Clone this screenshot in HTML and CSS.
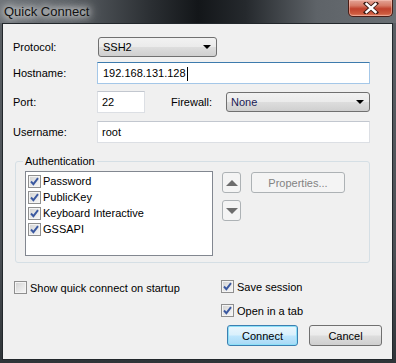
FILE: index.html
```html
<!DOCTYPE html>
<html lang="en">
<head>
  <meta charset="UTF-8">
  <meta name="viewport" content="width=device-width, initial-scale=1.0">
  <title>Quick Connect</title>
  <link rel="stylesheet" href="styles.css">
</head>
<body>
  <div class="window">
    <div class="titlebar">
      <span class="title">Quick Connect</span>
      <span class="close">
        <svg width="16" height="12" viewBox="0 0 16 12">
          <path d="M3 1.5 L13 10.5 M13 1.5 L3 10.5" stroke="#3a1a14" stroke-width="4.2" stroke-linecap="square"/>
          <path d="M3.5 2 L12.5 10 M12.5 2 L3.5 10" stroke="#ffffff" stroke-width="2.4" stroke-linecap="square"/>
        </svg>
      </span>
    </div>

    <div class="panel">
      <div class="row row-first">
        <label class="field-label">Protocol:</label>
        <div class="combo combo-protocol">SSH2<span class="arrow"></span></div>
      </div>

      <div class="row">
        <label class="field-label">Hostname:</label>
        <div class="textbox textbox-wide focused">192.168.131.128<span class="caret"></span></div>
      </div>

      <div class="row row-port">
        <label class="field-label">Port:</label>
        <div class="textbox textbox-port">22</div>
        <label class="firewall-label">Firewall:</label>
        <div class="combo combo-firewall">None<span class="arrow"></span></div>
      </div>

      <div class="row row-user">
        <label class="field-label">Username:</label>
        <div class="textbox textbox-wide">root</div>
      </div>

      <fieldset class="auth-group">
        <legend>Authentication</legend>
        <div class="auth-body">
          <div class="listbox">
            <div class="list-item"><span class="check checked"><svg width="9" height="9" viewBox="0 0 9 9"><path d="M1 4.5 L3.4 7.2 L8 1.2" stroke="#3a58a0" stroke-width="1.9" fill="none"/></svg></span>Password</div>
            <div class="list-item"><span class="check checked"><svg width="9" height="9" viewBox="0 0 9 9"><path d="M1 4.5 L3.4 7.2 L8 1.2" stroke="#3a58a0" stroke-width="1.9" fill="none"/></svg></span>PublicKey</div>
            <div class="list-item"><span class="check checked"><svg width="9" height="9" viewBox="0 0 9 9"><path d="M1 4.5 L3.4 7.2 L8 1.2" stroke="#3a58a0" stroke-width="1.9" fill="none"/></svg></span>Keyboard Interactive</div>
            <div class="list-item"><span class="check checked"><svg width="9" height="9" viewBox="0 0 9 9"><path d="M1 4.5 L3.4 7.2 L8 1.2" stroke="#3a58a0" stroke-width="1.9" fill="none"/></svg></span>GSSAPI</div>
          </div>
          <div class="order-buttons">
            <span class="small-btn"><span class="tri-up"></span></span>
            <span class="small-btn"><span class="tri-down"></span></span>
          </div>
          <span class="btn btn-disabled btn-properties">Properties...</span>
        </div>
      </fieldset>

      <div class="bottom">
        <div class="bottom-left">
          <div class="option"><span class="check"></span>Show quick connect on startup</div>
        </div>
        <div class="bottom-right">
          <div class="option"><span class="check checked"><svg width="9" height="9" viewBox="0 0 9 9"><path d="M1 4.5 L3.4 7.2 L8 1.2" stroke="#3a58a0" stroke-width="1.9" fill="none"/></svg></span>Save session</div>
          <div class="option option-tab"><span class="check checked"><svg width="9" height="9" viewBox="0 0 9 9"><path d="M1 4.5 L3.4 7.2 L8 1.2" stroke="#3a58a0" stroke-width="1.9" fill="none"/></svg></span>Open in a tab</div>
          <div class="actions">
            <span class="btn btn-default">Connect</span>
            <span class="btn btn-cancel">Cancel</span>
          </div>
        </div>
      </div>
    </div>
  </div>
</body>
</html>
```

FILE: styles.css
```css
/* Base styles */
html, body {
  margin: 0;
  padding: 0;
}

body {
  width: 396px;
  height: 363px;
  overflow: hidden;
  background: linear-gradient(to bottom, #5c6166 0%, #4a4f54 70%, #2f3438 100%);
  font-family: "Liberation Sans", Arial, sans-serif;
  font-size: 11px;
  color: #000;
}

.window {
  display: flex;
  flex-direction: column;
  height: 363px;
}

/* Title bar */
.titlebar {
  height: 23px;
  display: flex;
  align-items: flex-start;
  justify-content: space-between;
  background: linear-gradient(to right, #6e7378 0%, #5a5f64 18%, #2b2f33 38%, #131619 50%, #25292d 62%, #5e6368 80%, #6a6f74 100%);
}

.title {
  margin: 4px 0 0 4px;
  font-size: 13px;
  color: #111;
  text-shadow: 0 0 6px #fff, 0 0 10px #e6e6e6, 0 0 14px #d8d8d8;
}

.close {
  width: 45px;
  height: 17px;
  margin-right: 3px;
  box-sizing: border-box;
  border: 1px solid #4a1d16;
  border-top: none;
  border-radius: 0 0 5px 5px;
  background: linear-gradient(to bottom, #e4a597 0%, #d67a66 35%, #c0412c 55%, #cd5a3e 85%, #e2866a 100%);
  box-shadow: inset 0 0 0 1px rgba(255, 210, 200, 0.45);
  display: flex;
  align-items: center;
  justify-content: center;
}

/* Dialog panel */
.panel {
  margin-left: 2px;
  width: 391px;
  height: 337px;
  box-sizing: border-box;
  border: 1px solid #22272b;
  background: #f0f0f0;
  padding: 13px 0 0 10px;
}

.row {
  display: flex;
  align-items: center;
  height: 22px;
  margin-top: 5px;
}

.row-first {
  height: 20px;
  margin-top: 0;
}

.row-port {
  margin-top: 7px;
}

.row-user {
  margin-top: 8px;
}

.field-label {
  width: 84px;
  flex-shrink: 0;
}

/* Combo boxes */
.combo {
  position: relative;
  height: 20px;
  box-sizing: border-box;
  border: 1px solid #707070;
  border-radius: 3px;
  background: linear-gradient(to bottom, #f2f2f2 0%, #ebebeb 48%, #dddddd 52%, #cfcfcf 100%);
  padding: 3px 0 0 4px;
  line-height: 13px;
}

.combo-protocol {
  width: 119px;
  margin-left: 1px;
}

.combo-firewall {
  width: 144px;
  color: #1a1a55;
}

.arrow {
  position: absolute;
  right: 5px;
  top: 7px;
  width: 0;
  height: 0;
  border-left: 4px solid transparent;
  border-right: 4px solid transparent;
  border-top: 4px solid #000;
}

/* Text boxes */
.textbox {
  height: 22px;
  box-sizing: border-box;
  border: 1px solid #dcdfe4;
  border-top-color: #c2c7cf;
  background: #fff;
  padding: 4px 0 0 4px;
  line-height: 13px;
  display: flex;
}

.textbox-wide {
  width: 273px;
}

.textbox.focused {
  border-color: #a4c7e8;
  border-top-color: #3d7bad;
  padding-left: 5px;
}

.textbox-port {
  width: 48px;
}

.caret {
  width: 1px;
  height: 14px;
  background: #000;
  margin-left: 1px;
}

.firewall-label {
  margin-left: 26px;
  width: 55px;
}

/* Authentication group */
.auth-group {
  margin: 12px 0 0 2px;
  padding: 0 0 6px 9px;
  width: 355px;
  box-sizing: border-box;
  border: 1px solid #d5dfe5;
  border-radius: 3px;
}

.auth-group legend {
  margin-left: -2px;
  padding: 0 2px;
  line-height: 13px;
}

.auth-body {
  display: flex;
  align-items: flex-start;
  margin-top: 3px;
}

.listbox {
  width: 188px;
  height: 85px;
  box-sizing: border-box;
  border: 1px solid #828790;
  background: #fff;
  padding: 1px 0 0 2px;
}

.list-item {
  height: 16px;
  display: flex;
  align-items: center;
}

.check {
  width: 13px;
  height: 13px;
  box-sizing: border-box;
  border: 1px solid #8f8f8f;
  background: linear-gradient(135deg, #d0d0d0 0%, #e6e6e6 50%, #f7f7f7 100%);
  box-shadow: inset 0 0 0 1px #f4f4f4;
  display: flex;
  align-items: center;
  justify-content: center;
  margin-right: 2px;
  flex-shrink: 0;
}

.order-buttons {
  display: flex;
  flex-direction: column;
  gap: 7px;
  margin-left: 9px;
  margin-top: 1px;
}

.small-btn {
  width: 19px;
  height: 21px;
  box-sizing: border-box;
  border: 1px solid #adb2b5;
  border-radius: 3px;
  background: #f4f4f4;
  display: flex;
  align-items: center;
  justify-content: center;
}

.tri-up {
  border-left: 6px solid transparent;
  border-right: 6px solid transparent;
  border-bottom: 6px solid #6d6d6d;
}

.tri-down {
  border-left: 6px solid transparent;
  border-right: 6px solid transparent;
  border-top: 6px solid #6d6d6d;
}

/* Buttons */
.btn {
  height: 21px;
  box-sizing: border-box;
  border: 1px solid #707070;
  border-radius: 3px;
  display: flex;
  align-items: center;
  justify-content: center;
}

.btn-disabled {
  border-color: #adb2b5;
  background: #f4f4f4;
  color: #838383;
}

.btn-properties {
  width: 94px;
  margin: 1px 0 0 10px;
}

.btn-default {
  width: 71px;
  border-color: #3c7fb1;
  background: linear-gradient(to bottom, #eaf6fd 0%, #d9f0fc 48%, #bee6fd 52%, #a7d9f5 100%);
  box-shadow: inset 0 0 0 1px #8de0f8;
}

.btn-cancel {
  width: 73px;
  background: linear-gradient(to bottom, #f2f2f2 0%, #ebebeb 48%, #dddddd 52%, #cfcfcf 100%);
}

/* Bottom options */
.bottom {
  display: flex;
  margin-top: 17px;
}

.bottom-left {
  width: 207px;
  padding-left: 1px;
  padding-top: 1px;
}

.option {
  display: flex;
  align-items: center;
  height: 13px;
}

.option .check {
  margin-right: 3px;
}

.bottom-right {
  display: flex;
  flex-direction: column;
}

.option-tab {
  margin-top: 11px;
}

.actions {
  display: flex;
  gap: 11px;
  margin: 8px 0 0 6px;
}
```
